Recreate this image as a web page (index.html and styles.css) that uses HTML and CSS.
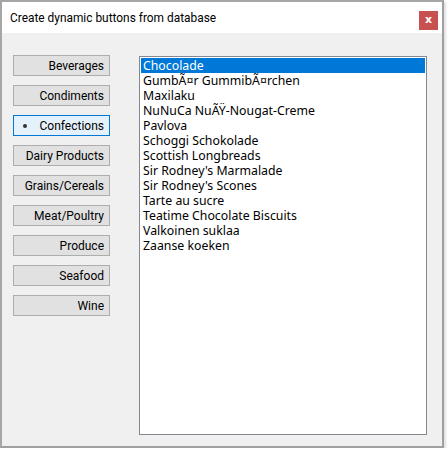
FILE: index.html
```html
<!DOCTYPE html>
<html>
<head>
<meta charset="utf-8">
<link rel="stylesheet" href="styles.css">
</head>
<body>
<div class="window">
  <div class="titlebar">
    <span class="title">Create dynamic buttons from database</span>
    <span class="close">x</span>
  </div>
  <div class="content">
    <div class="buttons">
      <div class="btn">Beverages</div>
      <div class="btn">Condiments</div>
      <div class="btn active"><span class="dot"></span>Confections</div>
      <div class="btn">Dairy Products</div>
      <div class="btn">Grains/Cereals</div>
      <div class="btn">Meat/Poultry</div>
      <div class="btn">Produce</div>
      <div class="btn">Seafood</div>
      <div class="btn">Wine</div>
    </div>
    <div class="listbox">
      <div class="item selected">Chocolade</div>
      <div class="item">GumbÃ¤r GummibÃ¤rchen</div>
      <div class="item">Maxilaku</div>
      <div class="item">NuNuCa NuÃŸ-Nougat-Creme</div>
      <div class="item">Pavlova</div>
      <div class="item">Schoggi Schokolade</div>
      <div class="item">Scottish Longbreads</div>
      <div class="item">Sir Rodney's Marmalade</div>
      <div class="item">Sir Rodney's Scones</div>
      <div class="item">Tarte au sucre</div>
      <div class="item">Teatime Chocolate Biscuits</div>
      <div class="item">Valkoinen suklaa</div>
      <div class="item">Zaanse koeken</div>
    </div>
  </div>
</div>
</body>
</html>
```

FILE: styles.css
```css
html, body {
  margin: 0;
  padding: 0;
  background: #ffffff;
}
body {
  font-family: "Noto Sans", "Open Sans", sans-serif;
  font-size: 12px;
  color: #000;
}
.window {
  width: 444px;
  height: 448px;
  box-sizing: border-box;
  border: 2px solid #a6a6a6;
  border-right-color: #a0a0a0;
  border-bottom-color: #a0a0a0;
  background: #f0f0f0;
  box-shadow: 2px 2px 2px rgba(0,0,0,0.12);
  display: flex;
  flex-direction: column;
}
.titlebar {
  height: 31px;
  background: #ffffff;
  display: flex;
  align-items: center;
  justify-content: space-between;
  padding: 0 4px 0 8px;
  flex-shrink: 0;
}
.title {
  font-family: Roboto, "Noto Sans", sans-serif;
  font-size: 11.9px;
  padding-top: 1px;
}
.close {
  width: 19px;
  height: 19px;
  background: #c75050;
  color: #fff;
  font-weight: bold;
  font-family: "DejaVu Sans", sans-serif;
  font-size: 11px;
  display: flex;
  align-items: center;
  justify-content: center;
  line-height: 1;
  margin-top: 5px;
  padding-bottom: 2px;
  box-sizing: border-box;
}
.content {
  display: flex;
  padding: 22px 0 0 11px;
  gap: 29px;
}
.buttons {
  display: flex;
  flex-direction: column;
  gap: 9px;
  width: 97px;
}
.btn {
  height: 21px;
  box-sizing: border-box;
  border: 1px solid #adadad;
  background: #e1e1e1;
  text-align: right;
  padding-right: 5px;
  font-family: Roboto, "Noto Sans", sans-serif;
  font-size: 12px;
  line-height: 20px;
  position: relative;
}
.btn.active {
  background: #e5f1fb;
  border-color: #0078d7;
}
.dot {
  position: absolute;
  left: 9px;
  top: 8px;
  width: 4px;
  height: 4px;
  border-radius: 50%;
  background: #333;
}
.listbox {
  margin-top: 1px;
  width: 288px;
  height: 379px;
  box-sizing: border-box;
  border: 1px solid #828790;
  background: #fff;
  padding: 1px;
}
.item {
  height: 15px;
  line-height: 15px;
  font-size: 12.3px;
  padding-left: 2px;
  white-space: nowrap;
}
.item.selected {
  background: #0078d7;
  color: #fff;
}
```
